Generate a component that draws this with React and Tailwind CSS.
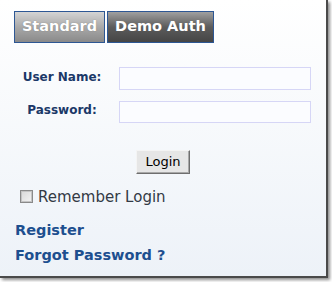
import React from "react";

export default function App() {
  const font = { fontFamily: '"DejaVu Sans", Verdana, sans-serif' };
  return (
    <div className="w-[332px] h-[282px] bg-white" style={font}>
      <div className="w-[328px] h-[278px] border-r-2 border-b-2 border-[#4a4a4a] shadow-[2px_2px_3px_rgba(0,0,0,0.45)] bg-gradient-to-b from-white to-[#edf2f8] flex flex-col">
        <div className="flex gap-[2px] pl-[14px] pt-[11px]">
          <div className="w-[91px] h-[32px] border border-[#2d5794] bg-gradient-to-b from-[#d4d4d4] via-[#a9a9a9] to-[#8a8a8a] flex items-center justify-center text-white font-bold text-[14.5px] [text-shadow:0_0_1px_rgba(0,0,0,0.35)]">
            Standard
          </div>
          <div className="w-[107px] h-[32px] border border-[#2d5794] bg-gradient-to-b from-[#a0a0a0] via-[#5c5c5c] to-[#454545] flex items-center justify-center text-white font-bold text-[14.5px]">
            Demo Auth
          </div>
        </div>

        <div className="grid grid-cols-[96px_192px] gap-x-[9px] gap-y-[11px] pl-[14px] mt-[24px] items-center">
          <div className="text-center text-[12px] font-bold text-[#1b3868] -mt-[4px]">User Name:</div>
          <div className="h-[23px] border border-[#d6d6f6] bg-[#fbfcff]" />
          <div className="text-center text-[12px] font-bold text-[#1b3868] -mt-[4px]">Password:</div>
          <div className="h-[22px] border border-[#d6d6f6] bg-[#fbfcff]" />
        </div>

        <div className="flex pl-[136px] mt-[27px]">
          <button className="w-[54px] h-[24px] bg-[#e6e6e6] border border-t-[#f4f4f4] border-l-[#f4f4f4] border-r-[#6e6e6e] border-b-[#6e6e6e] shadow-[inset_-1px_-1px_0_#a8a8a8] text-[13px] text-black flex items-center justify-center" style={{ fontFamily: '"DejaVu Sans", Tahoma, sans-serif' }}>
            Login
          </button>
        </div>

        <div className="flex items-center pl-[20px] mt-[15px] h-[16px]">
          <div className="w-[13px] h-[13px] border border-[#8a8a8a] bg-gradient-to-br from-[#d8d8d8] to-[#f4f4f4] shadow-[inset_0_0_0_1px_#c4c4c4] -mt-[1px]" />
          <span className="ml-[5px] text-[15px] text-[#333a45]">Remember Login</span>
        </div>

        <div className="pl-[15px] mt-[16px] flex flex-col gap-[7px] text-[14.5px] font-bold text-[#1d4f8f]">
          <span className="leading-[18px]">Register</span>
          <span className="leading-[18px]">Forgot Password ?</span>
        </div>
      </div>
    </div>
  );
}
